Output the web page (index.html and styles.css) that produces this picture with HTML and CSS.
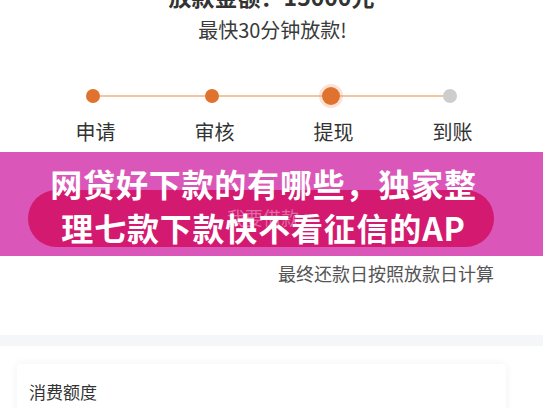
FILE: index.html
```html
<!DOCTYPE html>
<html lang="zh">
<head>
<meta charset="utf-8">
<link rel="stylesheet" href="styles.css">
</head>
<body>
<div class="page">
  <div class="amount">放款金额：15000元</div>
  <div class="sub">最快30分钟放款!</div>
  <div class="steps">
    <div class="track"></div>
    <div class="step"><span class="dot"></span><span class="label">申请</span></div>
    <div class="step"><span class="dot"></span><span class="label">审核</span></div>
    <div class="step"><span class="dot current"></span><span class="label">提现</span></div>
    <div class="step"><span class="dot todo"></span><span class="label">到账</span></div>
  </div>
  <div class="banner">
    <div class="pill">我要借款</div>
  </div>
  <div class="note">最终还款日按照放款日计算</div>
  <div class="band"></div>
  <div class="card">
    <div class="card-title">消费额度</div>
  </div>
  <div class="headline">网贷好下款的有哪些，独家整<br>理七款下款快不看征信的AP</div>
</div>
</body>
</html>
```
FILE: styles.css
```css
html, body {
  margin: 0;
  padding: 0;
  background: #fff;
  overflow: hidden;
}
.page {
  position: relative;
  display: flow-root;
  width: 543px;
  height: 408px;
  font-family: "Noto Sans CJK SC", "Noto Sans", sans-serif;
  color: #333;
}
.amount {
  margin-top: -17px;
  height: 26px;
  line-height: 26px;
  font-size: 23px;
  font-weight: bold;
  text-align: center;
  color: #333;
}
.sub {
  margin-top: 7px;
  font-size: 20px;
  line-height: 28px;
  text-align: center;
  padding-left: 2px;
  color: #3a3a3a;
}
.steps {
  position: relative;
  display: grid;
  grid-template-columns: repeat(4, 1fr);
  margin: 35px 0 0 33px;
  width: 476px;
}
.track {
  position: absolute;
  left: 60px;
  right: 60px;
  top: 16px;
  height: 2px;
  background: #f3c6a0;
}
.step {
  display: flex;
  flex-direction: column;
  align-items: center;
}
.dot {
  margin-top: 10px;
  width: 14px;
  height: 14px;
  border-radius: 50%;
  background: #e07230;
  z-index: 1;
}
.dot.current {
  margin-top: 8px;
  width: 18px;
  height: 18px;
  margin-bottom: -2px;
  box-shadow: 0 0 0 3px rgba(240, 150, 100, 0.28);
}
.dot.todo {
  background: #cdcdcd;
}
.label {
  margin-top: 15px;
  font-size: 20px;
  line-height: 28px;
  color: #333;
  padding-left: 6px;
}
.banner {
  margin-top: 6px;
  height: 104px;
  background: #da57b9;
  display: flex;
  align-items: flex-end;
  padding: 0 49px 9px 28px;
  box-sizing: border-box;
}
.pill {
  flex: 1;
  height: 57px;
  border-radius: 29px;
  background: #d31a70;
  color: #e06aa5;
  font-size: 18px;
  text-align: center;
  line-height: 54px;
  padding-left: 4px;
}
.note {
  margin-top: 4px;
  text-align: right;
  padding-right: 49px;
  font-size: 18px;
  line-height: 26px;
  color: #555;
}
.band {
  margin-top: 49px;
  height: 11px;
  background: #f5f6f8;
}
.card {
  margin: 18px 37px 0 17px;
  height: 80px;
  background: #fff;
  border-radius: 4px;
  box-shadow: 0 0 8px rgba(0, 0, 0, 0.06);
  padding: 16px 12px 0;
  box-sizing: border-box;
}
.card-title {
  font-size: 17px;
  line-height: 24px;
  color: #333;
}
.headline {
  position: absolute;
  left: 0;
  right: 16px;
  top: 161px;
  text-align: center;
  color: #fff;
  font-weight: bold;
  font-size: 32px;
  line-height: 44px;
  letter-spacing: 0.8px;
}
```
